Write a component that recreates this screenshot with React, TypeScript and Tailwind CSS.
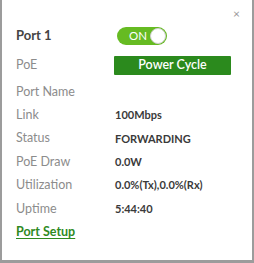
import React from "react";

const rows: [string, string][] = [
  ["Port Name", ""],
  ["Link", "100Mbps"],
  ["Status", "FORWARDING"],
  ["PoE Draw", "0.0W"],
  ["Utilization", "0.0%(Tx),0.0%(Rx)"],
  ["Uptime", "5:44:40"],
];

export default function App() {
  return (
    <div className="w-[254px] h-[263px] bg-[#9c9c9c] pl-[2px] pr-[2px] pb-[3px]" style={{ fontFamily: "Lato, 'Noto Sans', sans-serif" }}>
      <div className="relative w-[250px] h-[260px] bg-white pl-[14px] pt-[27px]">
        <div className="absolute right-[12px] top-[8px] text-[#999] text-[12px] leading-none">×</div>
        <div className="flex items-center h-[18px]">
          <div className="w-[101px] text-[13px] font-bold text-[#444]">Port 1</div>
          <div className="flex items-center w-[50px] h-[18px] rounded-full bg-[#66bb22] pl-[12px] pr-[1px]">
            <span className="text-white text-[11.5px] leading-none">ON</span>
            <span className="ml-auto w-[16px] h-[16px] rounded-full bg-white border border-[#cfcfcf]"></span>
          </div>
        </div>
        <div className="flex items-center h-[19px] mt-[11px]">
          <div className="w-[98px] text-[12.5px] text-[#8c8c8c]">PoE</div>
          <div className="w-[117px] h-[19px] bg-[#2b8a1d] text-white text-[12.5px] font-semibold flex items-center justify-center rounded-[1px]">Power Cycle</div>
        </div>
        <div className="mt-[5.3px] flex flex-col">
          {rows.map(([l, v]) => (
            <div key={l} className="flex items-center h-[23.4px]">
              <div className="w-[99px] text-[12.5px] text-[#8c8c8c]">{l}</div>
              <div className="text-[11px] font-bold text-[#3a3a3a]">{v}</div>
            </div>
          ))}
          <div className="flex items-center h-[23.4px]">
            <span className="text-[12.5px] font-bold text-[#2f8a1f] underline underline-offset-2">Port Setup</span>
          </div>
        </div>
      </div>
    </div>
  );
}
